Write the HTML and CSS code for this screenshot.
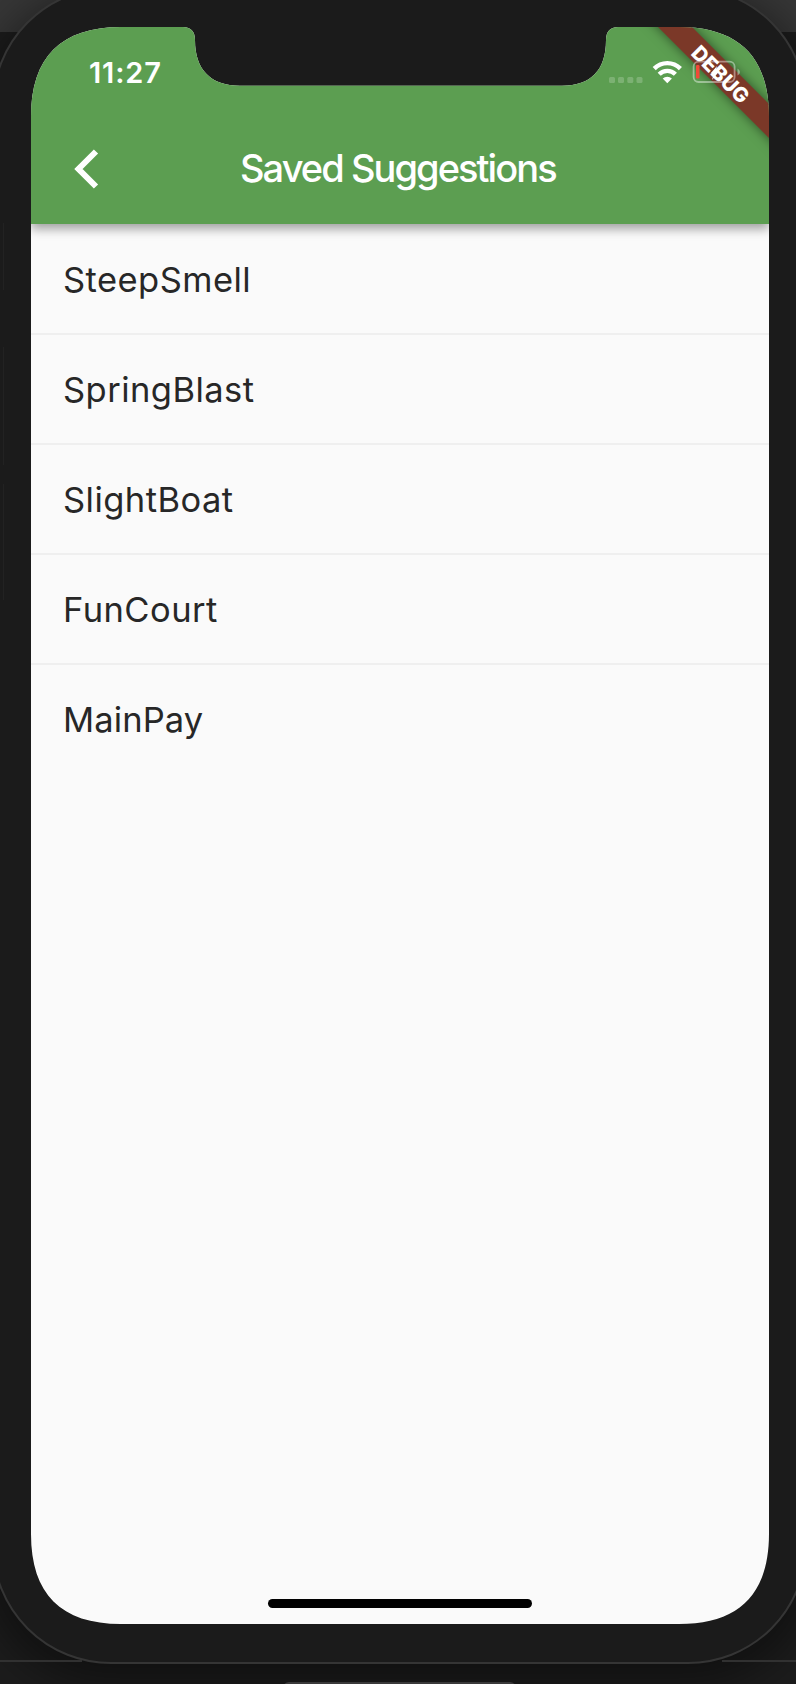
FILE: index.html
```
<!DOCTYPE html>
<html lang="en">
<head>
<meta charset="utf-8">
<title>Saved Suggestions</title>
<link rel="stylesheet" href="styles.css">
</head>
<body>
<div class="desktop">
  <div class="window-strip"></div>
  <div class="device"></div>
  <div class="window-edge left"></div>
  <div class="window-edge right"></div>
  <div class="dock-pill"></div>
  <i class="side-button mute"></i>
  <i class="side-button volume-up"></i>
  <i class="side-button volume-down"></i>
  <main class="screen">
    <header class="app-bar">
      <div class="status-bar">
        <span class="time">11:27</span>
        <svg class="indicators" width="134" height="26" viewBox="0 0 134 26">
          <g fill="#fff" fill-opacity=".2">
            <rect x="1" y="18" width="6" height="6" rx="1.5"/><rect x="10" y="18" width="6" height="6" rx="1.5"/><rect x="19.3" y="18" width="6" height="6" rx="1.5"/><rect x="28.5" y="18" width="6" height="6" rx="1.5"/>
          </g>
          <g fill="none" stroke="#fff" stroke-width="4.4">
            <path d="M46.2 9.6A18.5 18.5 0 0 1 72.4 9.6"/>
            <path d="M51.2 15.2A11.5 11.5 0 0 1 67.4 15.2"/>
          </g>
          <path fill="#fff" d="M54.7 19.5A7 7 0 0 1 63.9 19.5L59.3 24.2Z"/>
        </svg>
      </div>
      <div class="nav-bar">
        <svg class="back" width="26" height="42" viewBox="0 0 26 42"><path d="M22 3.5L4.5 21L22 38.5" fill="none" stroke="#fff" stroke-width="6"/></svg>
        <h1 class="title">Saved Suggestions</h1>
      </div>
    </header>
    <ul class="list">
      <li class="row">SteepSmell</li>
      <li class="row">SpringBlast</li>
      <li class="row">SlightBoat</li>
      <li class="row">FunCourt</li>
      <li class="row tight">MainPay</li>
    </ul>
    <div class="home-indicator"></div>
    <div class="banner"></div>
    <svg class="battery" width="50" height="24" viewBox="0 0 50 24">
      <rect x="1.6" y="1.6" width="41" height="20.4" rx="5" fill="none" stroke="#fff" stroke-opacity=".42" stroke-width="1.8"/>
      <path d="M45.5 8.5Q48 10 48 12T45.5 15.5Z" fill="#fff" fill-opacity=".42"/>
      <rect x="4" y="5" width="3.5" height="13.5" rx="1.2" fill="#f04a38"/>
      <path d="M25 6L18.500 13.500H22L20 20L27 11.500H23.500Z" fill="#fff"/>
    </svg>
    <div class="banner-label">DEBUG</div>
  </main>
</div>
</body>
</html>
```
FILE: styles.css
```
* { box-sizing: border-box; }
body { margin: 0; font-family: Inter, "Liberation Sans", sans-serif; }
.desktop {
  position: relative;
  width: 796px;
  height: 1684px;
  overflow: hidden;
  background: #1c1c1c;
  padding: 27px 27px 60px 31px;
}
.window-strip { position: absolute; left: 0; top: 0; width: 100%; height: 32px; background: #363636; }
.window-edge { position: absolute; top: 1660px; height: 2px; background: #313131; }
.left { left: 0; width: 82px; }
.right { right: 0; width: 74px; }
.dock-pill { position: absolute; left: 283px; top: 1682px; width: 233px; height: 12px; border-radius: 6px; background: #3a393a; }
.device {
  position: absolute;
  left: -8px;
  top: -13px;
  width: 815px;
  height: 1677px;
  border: 2px solid #353535;
  border-radius: 119px;
  background: #1b1b1b;
  box-shadow: 0 12px 40px 10px rgba(0, 0, 0, .4);
}
.side-button { position: absolute; left: 3px; width: 1px; background: #222; }
.mute { top: 223px; height: 67px; }
.volume-up { top: 347px; height: 118px; }
.volume-down { top: 484px; height: 116px; }
.screen {
  position: relative;
  display: flex;
  flex-direction: column;
  width: 738px;
  height: 1597px;
  background: #fafafa;
  clip-path: path("M0 90C0 30 30 0 90 0H152C160 0 164 5 164 13C164 43 180 58.7 209 58.7H531C560 58.7 575 43 575 13C575 5 579 0 587 0H648C708 0 738 30 738 90V1507C738 1567 708 1597 648 1597H90C30 1597 0 1567 0 1507Z");
}
.app-bar {
  position: relative;
  height: 197px;
  background: #5c9e51;
  color: #fff;
  box-shadow: 0 5px 10px rgba(0, 0, 0, .36);
}
.status-bar { display: flex; justify-content: space-between; height: 87px; padding: 30px 27px 0 58px; }
.time { font-size: 29px; font-weight: 600; line-height: 32px; letter-spacing: .85px; }
.indicators { display: block; margin-top: 2px; }
.nav-bar { display: flex; align-items: center; height: 109px; padding-left: 43px; }
.back { flex: none; }
.title { margin: 0 0 1px 140px; font-size: 38px; font-weight: 500; letter-spacing: -1.94px; line-height: 46px; white-space: nowrap; }
.list { list-style: none; margin: 0; padding: 1px 0 0; flex: 1; }
.row { display: flex; align-items: center; height: 110.1px; padding: 0 32px; border-bottom: 2px solid #efefef; color: #272727; font-size: 34.5px; letter-spacing: .45px; }
.row:last-child { border-bottom: 0; padding-bottom: 2px; }
.tight { letter-spacing: .1px; }
.home-indicator { width: 264px; height: 9px; margin: 0 auto 16px 237px; border-radius: 5px; background: #000; }
.banner, .banner-label {
  position: absolute;
  left: 540px;
  top: 34px;
  width: 300px;
  height: 24px;
  transform: rotate(45deg);
}
.banner { background: #7b3828; box-shadow: 0 0 12px rgba(0, 0, 0, .5); }
.banner-label {
  top: 35px;
  color: #fff;
  font-size: 20.5px;
  font-weight: 800;
  line-height: 26px;
  letter-spacing: .1px;
  text-align: center;
}
.battery { position: absolute; left: 661px; top: 33px; }
```
